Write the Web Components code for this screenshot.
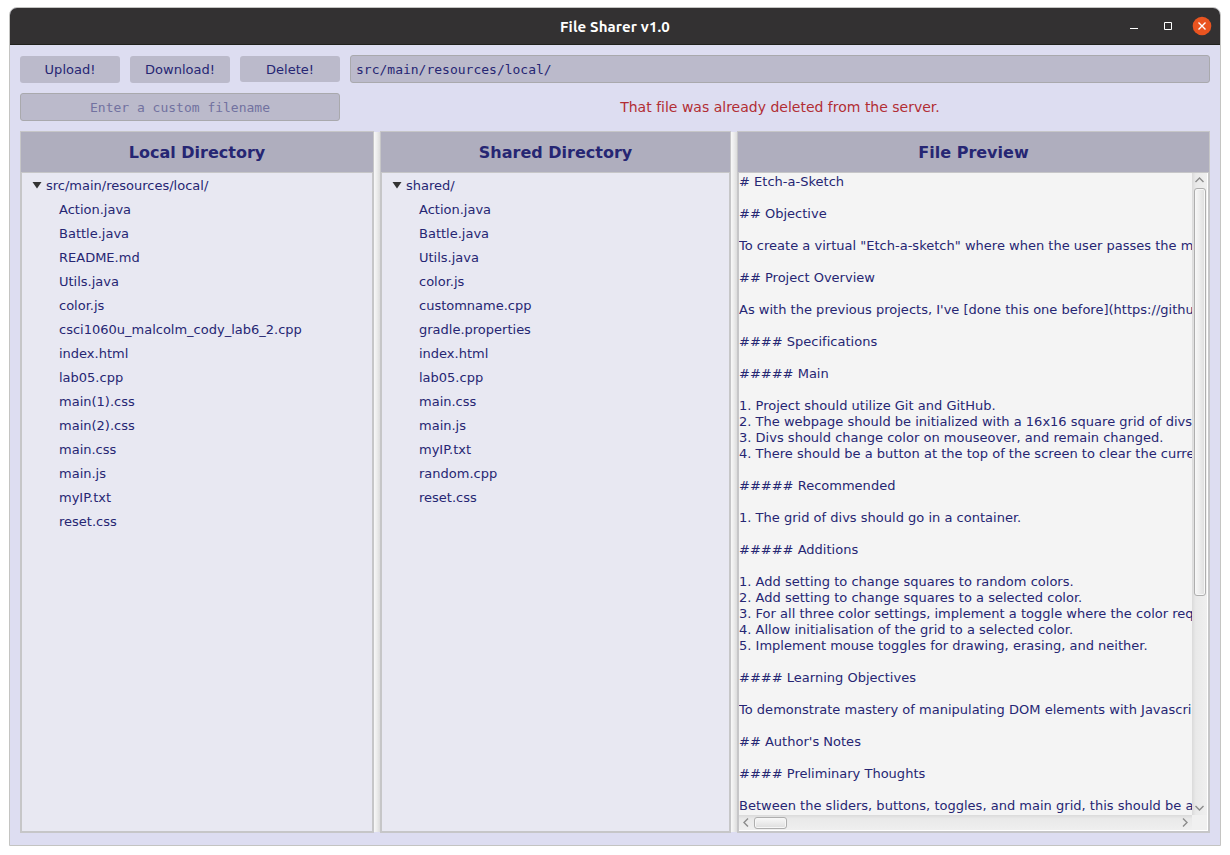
<!DOCTYPE html>
<html lang="en">
<head>
<meta charset="utf-8">
<title>File Sharer v1.0</title>
<style>
html,body{margin:0;height:100%;background:#fff;overflow:hidden}
body{font:13px/16px "DejaVu Sans",sans-serif;color:#262673;font-variant-ligatures:none}
.actions{display:flex;gap:10px;height:28px}
.status{display:flex;gap:10px;height:28px;margin-top:10px}
.panes{display:flex;height:702px;margin-top:10px}
.actions text-box{flex:1}
.status text-box{width:320px}
</style>
</head>
<body>
<app-window heading="File Sharer v1.0">
  <div class="actions">
    <flat-button>Upload!</flat-button><flat-button>Download!</flat-button><flat-button short>Delete!</flat-button>
    <text-box>src/main/resources/local/</text-box>
  </div>
  <div class="status">
    <text-box prompt>Enter a custom filename</text-box>
    <status-message>That file was already deleted from the server.</status-message>
  </div>
  <div class="panes">
    <titled-pane heading="Local Directory" style="width:354px"><file-tree root="src/main/resources/local/" files="Action.java|Battle.java|README.md|Utils.java|color.js|csci1060u_malcolm_cody_lab6_2.cpp|index.html|lab05.cpp|main(1).css|main(2).css|main.css|main.js|myIP.txt|reset.css"></file-tree></titled-pane>
    <split-divider></split-divider>
    <titled-pane heading="Shared Directory" style="width:351px"><file-tree root="shared/" files="Action.java|Battle.java|Utils.java|color.js|customname.cpp|gradle.properties|index.html|lab05.cpp|main.css|main.js|myIP.txt|random.cpp|reset.css"></file-tree></titled-pane>
    <split-divider></split-divider>
    <titled-pane heading="File Preview" style="width:473px"><file-preview># Etch-a-Sketch

## Objective

To create a virtual "Etch-a-sketch" where when the user passes the m

## Project Overview

As with the previous projects, I've [done this one before](https://githu

#### Specifications

##### Main

1. Project should utilize Git and GitHub.
2. The webpage should be initialized with a 16x16 square grid of divs
3. Divs should change color on mouseover, and remain changed.
4. There should be a button at the top of the screen to clear the curre

##### Recommended

1. The grid of divs should go in a container.

##### Additions

1. Add setting to change squares to random colors.
2. Add setting to change squares to a selected color.
3. For all three color settings, implement a toggle where the color req
4. Allow initialisation of the grid to a selected color.
5. Implement mouse toggles for drawing, erasing, and neither.

#### Learning Objectives

To demonstrate mastery of manipulating DOM elements with Javascri

## Author's Notes

#### Preliminary Thoughts

Between the sliders, buttons, toggles, and main grid, this should be a</file-preview></titled-pane>
  </div>
</app-window>
<script>
const define = (name, render) => customElements.define(name, class extends HTMLElement {
  connectedCallback() {
    if (!this.shadowRoot) this.attachShadow({mode: 'open'}).innerHTML = '<style>*{box-sizing:border-box}:host{box-sizing:border-box}</style>' + render(this);
  }
});

define('app-window', el => `<style>
:host{display:flex;flex-direction:column;width:1212px;height:839px;margin:7px 0 0 9px;border:1px solid #c4c4c2;border-radius:8px 8px 0 0;background:#ddddf1;overflow:hidden}
header{height:37px;flex:none;display:grid;grid-template-columns:1fr auto 1fr;align-items:center;background:#333132;border-bottom:1px solid #20211c;color:#fff}
h1{grid-column:2;margin:0;padding-top:1px;font:bold 15px/20px Ubuntu,"Noto Sans",sans-serif;letter-spacing:.13px}
svg{justify-self:end;display:block}
main{padding:10px}
</style>
<header><h1>${el.getAttribute('heading')}</h1>
<svg width="100" height="36" viewBox="0 0 100 36"><path fill="#fff" d="M10 20h8v1h-8z"/><path fill="none" stroke="#fff" d="M44.5 14.5h7v7h-7z"/><circle cx="82" cy="18" r="9.3" fill="#e95420"/><path d="M78.5 14.5l7 7m0-7l-7 7" stroke="#fff" stroke-width="1.4" fill="none"/></svg></header>
<main><slot></slot></main>`);

define('flat-button', () => `<style>
:host{display:flex;align-items:center;justify-content:center;width:100px;height:27px;margin-top:1px;border-radius:3px;background:#bbbacb}
:host([short]){height:26px;padding-top:2px}
</style><slot></slot>`);

define('text-box', () => `<style>
:host{display:flex;align-items:center;height:28px;padding:2px 5px 0;background:#bbbacb;border:1px solid #a9a9ad;border-radius:3px;font-family:"DejaVu Sans Mono",monospace;font-size:13px}
:host([prompt]){justify-content:center;color:#7272a0}
</style><slot></slot>`);

define('status-message', () => `<style>
:host{flex:1;display:flex;align-items:center;justify-content:center;color:#b22d34;font-size:14px}
</style><slot></slot>`);

define('titled-pane', el => `<style>
:host{display:flex;flex-direction:column;flex:none;height:702px}
h2{margin:0;height:41px;flex:none;border:1px solid #c6c6c8;border-bottom:0;background:#afaebe;text-align:center;font:bold 16px/41px "DejaVu Sans",sans-serif}
section{flex:1;min-height:0;border:2px solid #c6c6c8;border-top-width:1px;background:#e8e8f2}
</style><h2>${el.getAttribute('heading')}</h2><section><slot></slot></section>`);

define('split-divider', () => `<style>
:host{display:block;flex:none;width:6px;margin:1px 0;background:linear-gradient(90deg,#f8f8f8,#ececec 50%,#dcdcdc)}
</style>`);

define('file-tree', el => `<style>
:host{display:block;line-height:24px;padding-top:1px}
div{display:flex;align-items:center;gap:4px;height:24px;padding-left:10px}
svg{margin-top:-2px}
ul{list-style:none;margin:0;padding:0 0 0 37px}
li{height:24px;white-space:nowrap}
</style><div><svg width="10" height="8" viewBox="0 0 10 8"><path d="M.5 1h9L5 7.5z" fill="#333"/></svg><span>${el.getAttribute('root')}</span></div>
<ul>${el.getAttribute('files').split('|').map(f => `<li>${f}</li>`).join('')}</ul>`);

define('scroll-thumb', () => `<style>
:host{display:block;border:1px solid #aeaeae;border-radius:3px;background:linear-gradient(90deg,#f8f8f8,#dedede);box-shadow:inset 0 0 0 1px #f7f7f7}
:host([flat]){background:linear-gradient(#f8f8f8,#dedede)}
</style>`);

define('file-preview', () => `<style>
:host{display:grid;grid-template:642px 15px/453px 15px;height:658px;width:469px;background:#f4f4f4;border-right:1px solid #fff;border-bottom:1px solid #fff}
pre{margin:0;padding-top:1px;font:inherit;line-height:16px;letter-spacing:.012px;white-space:pre;overflow:hidden}
.v{display:flex;flex-direction:column;align-items:center;background:linear-gradient(90deg,#dadada,#e9e9e9 25%,#efefef)}
.v scroll-thumb{width:12px;height:408px;margin-bottom:auto}
.h{display:flex;align-items:center;height:15px;background:linear-gradient(#dadada,#e9e9e9 25%,#efefef)}
.h scroll-thumb{width:33px;height:12px;margin-right:auto}
.c{background:#f0f0f0;height:15px}
svg{display:block;flex:none;fill:none;stroke:#8b8b8b;stroke-width:1.4}
</style><pre><slot></slot></pre>
<div class="v"><svg width="15" height="15"><path d="M3.5 9L7.5 5l4 4"/></svg><scroll-thumb></scroll-thumb><svg width="15" height="15"><path d="M3.5 6L7.5 10l4-4"/></svg></div>
<div class="h"><svg width="15" height="15"><path d="M9 3.5L5 7.5l4 4"/></svg><scroll-thumb flat></scroll-thumb><svg width="15" height="15"><path d="M6 3.5L10 7.5l-4 4"/></svg></div><div class="c"></div>`);
</script>
</body>
</html>
